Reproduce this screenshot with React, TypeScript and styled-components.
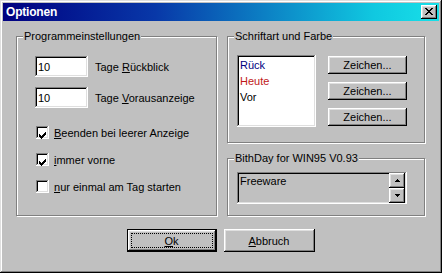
import React from "react";
import styled, { createGlobalStyle, css } from "styled-components";

const GlobalStyle = createGlobalStyle`
  html, body {
    margin: 0;
    padding: 0;
    background: #c0c0c0;
  }
  body {
    font-family: "Liberation Sans", Arial, sans-serif;
    font-size: 11px;
    color: #000;
  }
  * {
    box-sizing: border-box;
  }
`;

const raised = css`
  box-shadow: inset -1px -1px #000, inset 1px 1px #fff, inset -2px -2px #808080,
    inset 2px 2px #dfdfdf;
`;

const sunken = css`
  box-shadow: inset -1px -1px #fff, inset 1px 1px #808080, inset -2px -2px #dfdfdf,
    inset 2px 2px #000;
`;

const Window = styled.div`
  width: 442px;
  height: 273px;
  padding: 3px;
  background: #c0c0c0;
  display: flex;
  flex-direction: column;
  box-shadow: inset -1px -1px #000, inset 1px 1px #dfdfdf, inset -2px -2px #808080,
    inset 2px 2px #fff;
`;

const TitleBar = styled.div`
  height: 18px;
  display: flex;
  align-items: center;
  justify-content: space-between;
  padding: 0 2px 0 3px;
  background: linear-gradient(to right, #000080 0%, #0838a8 35%, #10c8e0 85%, #18e0e8 100%);
`;

const Title = styled.span`
  color: #fff;
  font-weight: bold;
  font-size: 12px;
  letter-spacing: -0.2px;
`;

const CloseButton = styled.div`
  width: 16px;
  height: 14px;
  background: #c0c0c0;
  display: flex;
  align-items: center;
  justify-content: center;
  padding: 0 0 1px 0;
  ${raised}
`;

const Body = styled.div`
  flex: 1;
  display: flex;
  flex-direction: column;
  padding: 15px 14px 0 13px;
`;

const GroupRow = styled.div`
  display: flex;
  gap: 10px;
`;

const RightColumn = styled.div`
  display: flex;
  flex-direction: column;
  gap: 15px;
`;

const Group = styled.div<{ $w: number; $h: number; $pad: string }>`
  position: relative;
  width: ${(p) => p.$w}px;
  height: ${(p) => p.$h}px;
  padding: ${(p) => p.$pad};
  border: 1px solid #808080;
  box-shadow: inset 1px 1px #fff, 1px 1px #fff;
`;

const Legend = styled.span`
  position: absolute;
  top: -8px;
  left: 6px;
  padding: 0 1px;
  line-height: 14px;
  background: #c0c0c0;
  white-space: nowrap;
`;

const Stack = styled.div<{ $gap: number; $top?: number }>`
  display: flex;
  flex-direction: column;
  gap: ${(p) => p.$gap}px;
  margin-top: ${(p) => p.$top ?? 0}px;
`;

const FieldRow = styled.div`
  display: flex;
  align-items: center;
  gap: 7px;
`;

const NumberInput = styled.input`
  width: 53px;
  height: 21px;
  border: none;
  outline: none;
  margin: 0;
  padding: 1px 3px 0;
  background: #fff;
  font: inherit;
  color: #000;
  ${sunken}
`;

const CheckRow = styled.div`
  display: flex;
  align-items: center;
  gap: 5px;
  height: 13px;
  padding-left: 1px;
`;

const CheckBox = styled.div`
  width: 13px;
  height: 13px;
  background: #fff;
  padding: 3px;
  ${sunken}
`;

const Mn = styled.span`
  text-decoration: underline;
`;

const Row = styled.div`
  display: flex;
  align-items: flex-start;
  gap: 12px;
`;

const ListBox = styled.div`
  width: 79px;
  height: 72px;
  background: #fff;
  padding: 2px 3px;
  ${sunken}
`;

const ListItem = styled.div<{ $color: string }>`
  line-height: 16px;
  color: ${(p) => p.$color};
`;

const Button = styled.div<{ $w: number; $h: number; $default?: boolean }>`
  position: relative;
  width: ${(p) => p.$w}px;
  height: ${(p) => p.$h}px;
  display: flex;
  align-items: center;
  justify-content: center;
  background: #c0c0c0;
  ${(p) =>
    p.$default
      ? css`
          border: 1px solid #000;
          ${raised}
          &::after {
            content: "";
            position: absolute;
            inset: 3px;
            border: 1px dotted #000;
          }
        `
      : raised}
`;

const InfoField = styled.div`
  width: 170px;
  height: 32px;
  display: flex;
  justify-content: space-between;
  padding: 2px 2px 1px 3px;
  ${sunken}
`;

const InfoText = styled.div`
  line-height: 15px;
`;

const Spin = styled.div`
  display: flex;
  flex-direction: column;
  margin-top: -1px;
`;

const SpinButton = styled.div`
  width: 16px;
  height: 15px;
  display: flex;
  align-items: center;
  justify-content: center;
  background: #c0c0c0;
  ${raised}
`;

const ButtonRow = styled.div`
  display: flex;
  justify-content: center;
  gap: 7px;
  margin-top: 13px;
`;

const CloseIcon = () => (
  <svg width="8" height="7" viewBox="0 0 8 7" shapeRendering="crispEdges">
    <path
      d="M0 0h2v1H0zM6 0h2v1H6zM1 1h2v1H1zM5 1h2v1H5zM2 2h4v1H2zM3 3h2v1H3zM2 4h4v1H2zM1 5h2v1H1zM5 5h2v1H5zM0 6h2v1H0zM6 6h2v1H6z"
      fill="#000"
    />
  </svg>
);

const CheckMark = () => (
  <svg width="7" height="7" viewBox="0 0 7 7" shapeRendering="crispEdges">
    <path
      d="M6 0h1v1H6zM5 1h2v1H5zM0 2h1v1H0zM4 2h3v1H4zM0 3h2v1H0zM3 3h3v1H3zM0 4h5v1H0zM1 5h3v1H1zM2 6h1v1H2z"
      fill="#000"
    />
  </svg>
);

const Arrow = ({ down }: { down?: boolean }) => (
  <svg width="5" height="3" viewBox="0 0 5 3" shapeRendering="crispEdges">
    <path
      d={down ? "M0 0h5v1H0zM1 1h3v1H1zM2 2h1v1H2z" : "M2 0h1v1H2zM1 1h3v1H1zM0 2h5v1H0z"}
      fill="#000"
    />
  </svg>
);

const Check: React.FC<{ checked?: boolean; children: React.ReactNode }> = ({
  checked,
  children,
}) => (
  <CheckRow>
    <CheckBox>{checked && <CheckMark />}</CheckBox>
    <span>{children}</span>
  </CheckRow>
);

const App: React.FC = () => {
  return (
    <>
      <GlobalStyle />
      <Window>
        <TitleBar>
          <Title>Optionen</Title>
          <CloseButton>
            <CloseIcon />
          </CloseButton>
        </TitleBar>
        <Body>
          <GroupRow>
            <Group $w={201} $h={180} $pad="19px 0 0 18px">
              <Legend>Programmeinstellungen</Legend>
              <Stack $gap={10}>
                <FieldRow>
                  <NumberInput defaultValue="10" readOnly />
                  <span>
                    Tage <Mn>R</Mn>ückblick
                  </span>
                </FieldRow>
                <FieldRow>
                  <NumberInput defaultValue="10" readOnly />
                  <span>
                    Tage <Mn>V</Mn>orausanzeige
                  </span>
                </FieldRow>
              </Stack>
              <Stack $gap={14} $top={18}>
                <Check checked>
                  <Mn>B</Mn>eenden bei leerer Anzeige
                </Check>
                <Check checked>
                  <Mn>i</Mn>mmer vorne
                </Check>
                <Check>
                  <Mn>n</Mn>ur einmal am Tag starten
                </Check>
              </Stack>
            </Group>
            <RightColumn>
              <Group $w={198} $h={107} $pad="18px 0 0 9px">
                <Legend>Schriftart und Farbe</Legend>
                <Row>
                  <ListBox>
                    <ListItem $color="#000080">Rück</ListItem>
                    <ListItem $color="#c01818">Heute</ListItem>
                    <ListItem $color="#000">Vor</ListItem>
                  </ListBox>
                  <Stack $gap={8} $top={1}>
                    <Button $w={79} $h={18}>Zeichen...</Button>
                    <Button $w={79} $h={18}>Zeichen...</Button>
                    <Button $w={79} $h={18}>Zeichen...</Button>
                  </Stack>
                </Row>
              </Group>
              <Group $w={198} $h={58} $pad="13px 0 0 9px">
                <Legend>BithDay for WIN95 V0.93</Legend>
                <InfoField>
                  <InfoText>Freeware</InfoText>
                  <Spin>
                    <SpinButton>
                      <Arrow />
                    </SpinButton>
                    <SpinButton>
                      <Arrow down />
                    </SpinButton>
                  </Spin>
                </InfoField>
              </Group>
            </RightColumn>
          </GroupRow>
          <ButtonRow>
            <Button $w={90} $h={23} $default>
              <span>
                <Mn>O</Mn>k
              </span>
            </Button>
            <Button $w={91} $h={23}>
              <span>
                <Mn>A</Mn>bbruch
              </span>
            </Button>
          </ButtonRow>
        </Body>
      </Window>
    </>
  );
};

export default App;
